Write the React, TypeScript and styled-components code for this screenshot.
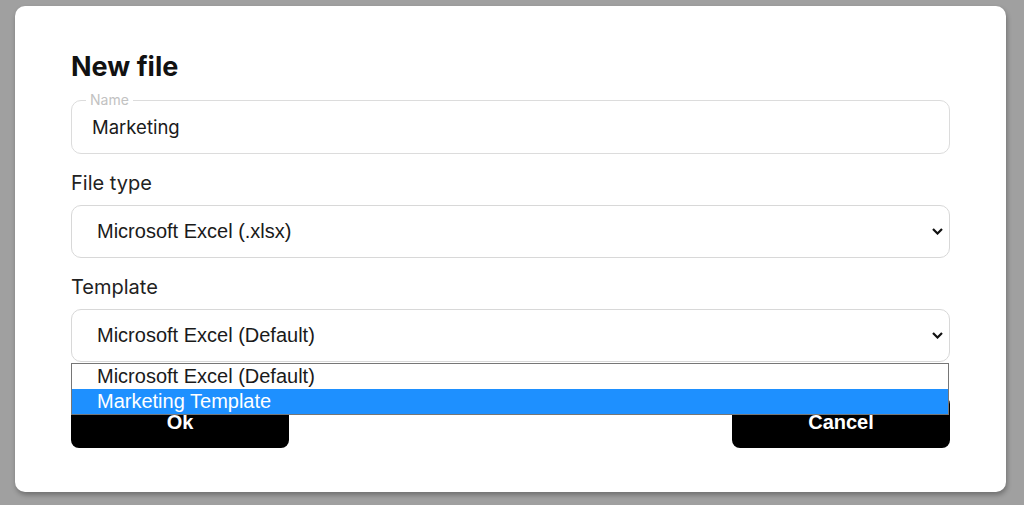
import React from "react";
import styled, { createGlobalStyle } from "styled-components";

const Global = createGlobalStyle`
  html, body { margin: 0; padding: 0; }
  body {
    background: #a0a0a0;
    font-family: Inter, "Noto Sans", sans-serif;
    width: 1024px;
    height: 505px;
    overflow: hidden;
  }
  * { box-sizing: border-box; }
`;

const Backdrop = styled.div`
  padding: 6px 18px 13px 15px;
`;

const Modal = styled.div`
  width: 991px;
  height: 486px;
  background: #ffffff;
  border-radius: 10px;
  box-shadow: 1px 3px 5px rgba(0, 0, 0, 0.3);
  padding: 45px 56px 44px 56px;
  display: flex;
  flex-direction: column;
`;

const Title = styled.h1`
  margin: 0;
  font-family: Inter, sans-serif;
  font-size: 27px;
  font-weight: 700;
  line-height: 32px;
  color: #111;
`;

const NameField = styled.fieldset`
  margin: 9px 0 0 0;
  padding: 0 14px;
  border: 1px solid #dcdcdc;
  border-radius: 10px;
  height: 65px;
`;

const Legend = styled.legend`
  padding: 0 4px;
  font-family: Inter, sans-serif;
  font-size: 14px;
  line-height: 16px;
  color: #c2c2c2;
`;

const TextInput = styled.input`
  display: block;
  width: 100%;
  border: none;
  outline: none;
  padding: 0 0 0 6px;
  height: 37px;
  font-family: Inter, sans-serif;
  font-size: 18.5px;
  color: #1a1a1a;
  background: transparent;
`;

const Label = styled.label`
  display: block;
  margin: 15px 0 10px 0;
  padding-top: 2px;
  font-family: Inter, sans-serif;
  font-size: 20px;
  line-height: 24px;
  color: #222;
`;

const SelectWrap = styled.div`
  position: relative;
`;

const SelectBox = styled.div`
  height: 53px;
  border: 1px solid #d8d8d8;
  border-radius: 10px;
  display: flex;
  align-items: center;
  justify-content: space-between;
  padding: 0 6px 0 25px;
  font-family: "Liberation Sans", Arial, sans-serif;
  font-size: 20px;
  color: #1a1a1a;
`;

const Chevron = styled.svg`
  width: 11px;
  height: 7px;
  display: block;
`;

const OptionList = styled.ul`
  position: absolute;
  left: 0;
  right: 1px;
  top: calc(100% + 1px);
  margin: 0;
  padding: 0;
  list-style: none;
  background: #fff;
  border: 1px solid #767676;
  z-index: 5;
`;

const OptionItem = styled.li<{ $active?: boolean }>`
  height: 25px;
  line-height: 25px;
  padding-left: 25px;
  font-family: "Liberation Sans", Arial, sans-serif;
  font-size: 20px;
  color: ${(p) => (p.$active ? "#ffffff" : "#1a1a1a")};
  background: ${(p) => (p.$active ? "#1e90ff" : "#ffffff")};
`;

const Actions = styled.div`
  display: flex;
  justify-content: space-between;
  margin-top: 34px;
`;

const Button = styled.button`
  width: 218px;
  height: 52px;
  border: none;
  border-radius: 8px;
  background: #000;
  color: #fff;
  font-family: "Liberation Sans", Arial, sans-serif;
  font-weight: 700;
  font-size: 20px;
  padding: 0;
`;

const ChevronIcon = () => (
  <Chevron viewBox="0 0 11 7">
    <path d="M1 1 L5.5 5.5 L10 1" fill="none" stroke="#111" strokeWidth="2.2" />
  </Chevron>
);

export default function App() {
  return (
    <>
      <Global />
      <Backdrop>
        <Modal>
          <Title>New file</Title>
          <NameField>
            <Legend>Name</Legend>
            <TextInput defaultValue="Marketing" />
          </NameField>
          <Label>File type</Label>
          <SelectWrap>
            <SelectBox>
              <span>Microsoft Excel (.xlsx)</span>
              <ChevronIcon />
            </SelectBox>
          </SelectWrap>
          <Label>Template</Label>
          <SelectWrap>
            <SelectBox>
              <span>Microsoft Excel (Default)</span>
              <ChevronIcon />
            </SelectBox>
            <OptionList>
              <OptionItem>Microsoft Excel (Default)</OptionItem>
              <OptionItem $active>Marketing Template</OptionItem>
            </OptionList>
          </SelectWrap>
          <Actions>
            <Button>Ok</Button>
            <Button>Cancel</Button>
          </Actions>
        </Modal>
      </Backdrop>
    </>
  );
}
